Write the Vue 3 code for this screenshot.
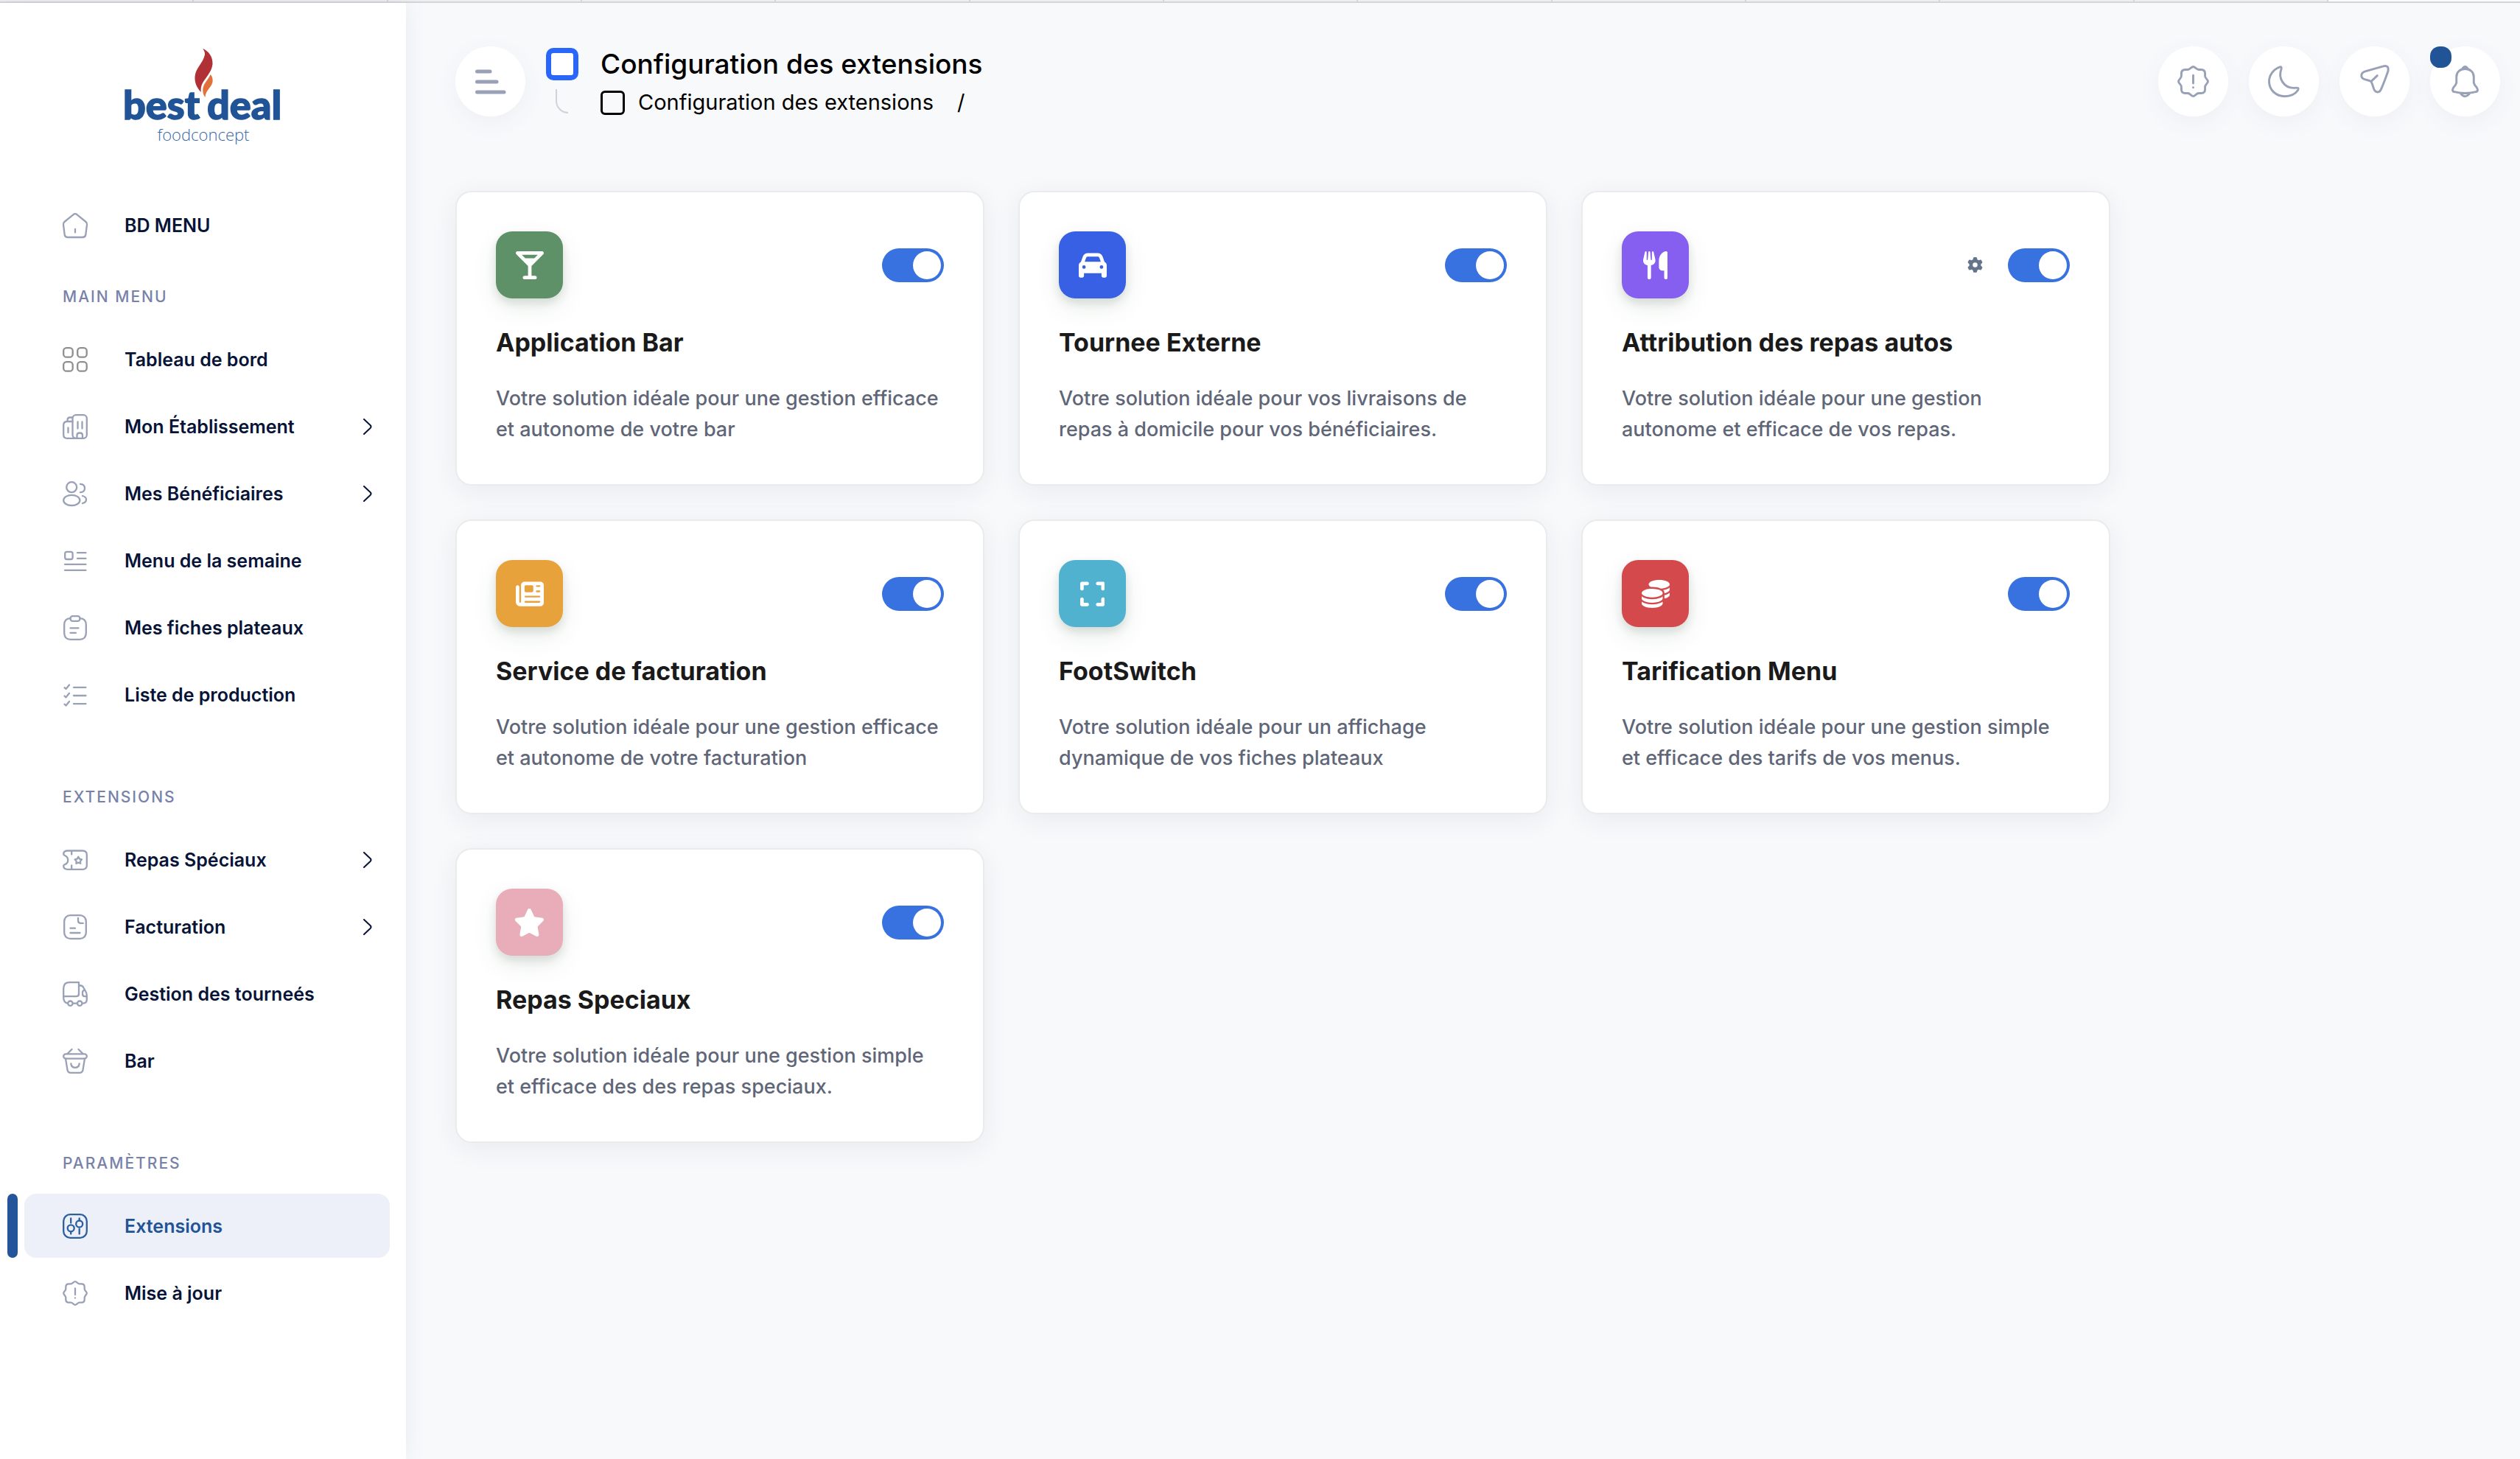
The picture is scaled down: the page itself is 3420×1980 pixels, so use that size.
<template>
  <div class="page">
    <div class="tab-strip">
      <span v-for="n in 12" :key="n" class="tab"></span>
    </div>

    <div class="layout">
      <aside class="sidebar">
        <a href="#" class="logo" aria-label="best deal foodconcept">
          <svg width="214" height="132" viewBox="0 0 214 132">
            <path fill="#b03035" d="M106 0C114 3 120 11 119.500 21C118.500 33 107 42 104.500 50C103.500 53 103.500 56 103.800 59C98 53 95 46 95.500 38C96.500 26 107 19 109 8C109.300 5 108 2 106 0Z" />
            <path fill="#e2703a" d="M116.500 35C119.500 38 120.500 43 119 47C117 53 110 57 109.500 66C105.500 61 105.500 54 108 49C110.500 44 115 40 116.500 35Z" />
            <text x="-2" y="96" class="logo-name">best</text>
            <text x="112" y="96" class="logo-name">deal</text>
            <text x="107" y="125" text-anchor="middle" class="logo-sub">foodconcept</text>
          </svg>
        </a>

        <nav class="menu">
          <section v-for="section in menu" :key="section.items[0].label" class="menu-section">
            <h2 v-if="section.title" class="menu-heading">{{ section.title }}</h2>
            <a
              v-for="item in section.items"
              :key="item.label"
              href="#"
              class="menu-item"
              :class="{ active: item.active, dashboard: item.icon === 'grid' }"
            >
              <svg class="menu-icon" viewBox="0 0 34 34" v-html="lineIcons[item.icon]"></svg>
              <span class="menu-label">{{ item.label }}</span>
              <svg v-if="item.children" class="chevron" viewBox="0 0 12 22">
                <path d="M1 1L9.500 9Q11.500 11 9.500 13L1 21" />
              </svg>
            </a>
          </section>
        </nav>
      </aside>

      <main class="main">
        <header class="topbar">
          <button type="button" class="round-btn" aria-label="Menu">
            <svg class="burger" viewBox="0 0 42 34">
              <path d="M2.500 3H20M2.500 17H29M2.500 31H39" />
            </svg>
          </button>

          <div class="heading">
            <div class="heading-marks">
              <span class="mark-box"></span>
              <span class="mark-branch"></span>
            </div>
            <div class="heading-text">
              <h1>Configuration des extensions</h1>
              <div class="breadcrumb">
                <span class="crumb-box"></span>
                <a href="#">Configuration des extensions</a>
                <span class="slash">/</span>
              </div>
            </div>
          </div>

          <div class="actions">
            <button
              v-for="action in actions"
              :key="action.icon"
              type="button"
              class="round-btn"
              :aria-label="action.label"
            >
              <svg class="action-icon" viewBox="0 0 34 34" v-html="lineIcons[action.icon]"></svg>
              <span v-if="action.badge" class="badge"></span>
            </button>
          </div>
        </header>

        <div class="cards">
          <article v-for="ext in extensions" :key="ext.id" class="card">
            <div class="card-top">
              <div class="tile" :style="{ backgroundColor: ext.color }">
                <svg class="tile-icon" :viewBox="`0 0 ${ext.box} 512`"><path :d="ext.path" /></svg>
              </div>
              <div class="card-controls">
                <button v-if="ext.settings" type="button" class="gear" aria-label="Paramètres">
                  <svg viewBox="0 0 512 512"><path :d="gearPath" /></svg>
                </button>
                <input :id="ext.id" v-model="ext.enabled" type="checkbox" class="switch" />
              </div>
            </div>
            <h3><label :for="ext.id">{{ ext.title }}</label></h3>
            <p>{{ ext.lines[0] }}<br />{{ ext.lines[1] }}</p>
          </article>
        </div>
      </main>
    </div>
  </div>
</template>

<script setup>
import { ref } from 'vue';

// outline icons, drawn on a 34 x 34 grid
const lineIcons = {
  home: '<path d="M19 1.800L31.500 12Q33.300 13.500 33 16L31.300 29.500Q30.800 33 27 33H7Q3.200 33 2.700 29.500L1 16Q.7 13.500 2.500 12L15 1.800Q17 .4 19 1.800Z"/><path d="M17 22V26.500"/>',
  grid: '<rect x="1.200" y="1.200" width="12.500" height="12.500" rx="4"/><rect x="20.200" y="1.200" width="12.500" height="12.500" rx="4"/><rect x="1.200" y="20.200" width="12.500" height="12.500" rx="4"/><rect x="20.200" y="20.200" width="12.500" height="12.500" rx="4"/>',
  building: '<rect x="13.500" y="1.200" width="19.300" height="31.600" rx="4.500"/><path d="M13.500 10H6Q1.200 10 1.200 15V28Q1.200 32.800 6 32.800H18M6.500 10V8.500Q6.500 4.500 10 4.500H13.500M7.500 18.500V25M20.500 10.500V19.500M26.500 10.500V19.500M19.500 32.500V28.500Q19.500 25.500 23.200 25.500T27 28.500V32.500"/>',
  users: '<circle cx="12.200" cy="8.200" r="7"/><ellipse cx="12.300" cy="25.900" rx="11.100" ry="7.100"/><path d="M24 3.800C28 4 30 6.500 30 9.500S28 15 24 15.200M27 20C30.500 20.800 32 22.800 32 25S30.500 29.200 27 30"/>',
  menu: '<rect x="3.200" y="4.800" width="10.400" height="10.200" rx="2.500"/><path d="M20 6.200H31.500M20 13.800H31.500M3 21.800H31.500M3 29.800H31.500"/>',
  clipboard: '<path d="M10.500 4.200Q2.200 4.500 2.200 13V24Q2.200 32.800 11 32.800H23Q31.800 32.800 31.800 24V13Q31.800 4.500 23.500 4.200"/><rect x="10.500" y="1.200" width="13" height="6.600" rx="3"/><path d="M10.500 17.300H21.500M10.500 23.800H18"/>',
  list: '<path d="M2.500 7.200L4.500 9L9 3.500M2.500 18.500L4.500 20.300L9 14.800M2.500 29.700L4.500 31.500L9 26M15 6.800H31.500M15 18H31.500M15 29.200H31.500"/>',
  ticket: '<path d="M7 4.500H27Q32.800 4.500 32.800 10V24.500Q32.800 29.800 27 29.800H7Q1.200 29.800 1.200 25Q1.200 23.800 3 23.200Q7.200 21.500 7.200 17.200T3 11Q1.200 10.400 1.200 9Q1.200 4.500 7 4.500ZM12.200 4.500V9.500M12.200 24.500V29.500"/><path d="M21.300 12.800L22.900 15.600L26 16.300L23.900 18.700L24.200 21.800L21.300 20.600L18.400 21.800L18.700 18.700L16.600 16.300L19.700 15.600Z"/>',
  invoice: '<rect x="2.200" y="1.200" width="29.600" height="31.600" rx="8"/><path d="M21 5V8.500Q21 11.800 24.500 11.800H27.800M10.500 18.700H17M10.500 25H23.500"/>',
  truck: '<path d="M7 29.600Q1.200 28.500 1.200 22V9.500Q1.200 1.200 9.500 1.200H22V16.500Q22 20.200 18.500 20.200H1.500M22 5.500H24.500Q27 5.500 28.500 8.500L31.500 14Q32.800 16.500 32.800 19V24.500Q32.800 29.600 27.500 29.600M14 29.600H19.500M29.500 11.500Q27 12.500 27 15V17Q27 20.200 30 20.200H32.500"/><circle cx="10.400" cy="29.700" r="3.200"/><circle cx="23.200" cy="29.700" r="3.200"/>',
  basket: '<rect x="1.200" y="7.400" width="31.600" height="6.200" rx="3"/><path d="M12.500 1L6.500 7M21.500 1L27.500 7M4 13.600L6.500 29Q7.200 32.800 11 32.800H23Q26.800 32.800 27.500 29L30 13.600M11.300 20.500Q12 25.800 17 25.800T22.700 20.500"/>',
  sliders: '<rect x="1.200" y="1.200" width="31.600" height="31.600" rx="9"/><circle cx="11.200" cy="19.800" r="4.500"/><circle cx="22.700" cy="14" r="4.500"/><path d="M11.200 6.500V12.500M11.200 24.500V27.500M22.700 6.500V9M22.700 21V27.500"/>',
  notice: '<path d="M17 1.200C19 1.200 20.500 4.300 22.800 4.300H25.500Q29.700 4.300 29.700 8.500V11.200C29.700 13.500 32.800 15 32.800 17S29.700 20.500 29.700 22.800V25.500Q29.700 29.700 25.500 29.700H22.800C20.500 29.700 19 32.800 17 32.800S13.500 29.700 11.200 29.700H8.500Q4.300 29.700 4.300 25.500V22.800C4.300 20.500 1.200 19 1.200 17S4.300 13.500 4.300 11.200V8.500Q4.300 4.300 8.500 4.300H11.200C13.500 4.300 15 1.200 17 1.200Z"/><path d="M17 10.500V19M17 23.400V23.600"/>',
  moon: '<path d="M12.300 1.700Q15 .6 14.300 3.500C10.500 13.500 17 24.500 28.500 24Q34 23 32 26.500C29 31 24 33 18 33C8.500 33 1.200 26 1.200 17C1.200 10 6 4 12.300 1.700Z"/>',
  plane: '<path d="M26.500 .7L7 6.300C1.500 8.200 2 13.300 6.500 14.800L11.500 16.200Q13.700 17 14.300 19L16.500 25.500C18.300 29.500 22.500 29.300 24 25.500Q26.500 20.500 31.600 6Q32.800 -.8 26.500 .7ZM13.700 16.700L20 10.800"/>',
  bell: '<path d="M7.700 18.500V12C7.700 7 11.500 3.600 17 3.600S26.300 7 26.300 12V18.500Q27 21 29 22.800Q31.500 26 29.500 28Q17 31.300 4.500 28Q2.500 26 5 22.800Q7 21 7.700 18.500ZM13.700 4Q17 -1.800 20.300 4M12.500 30.500Q17 35.500 21.500 30.500"/>'
};

const menu = [
  { items: [{ icon: 'home', label: 'BD MENU' }] },
  {
    title: 'MAIN MENU',
    items: [
      { icon: 'grid', label: 'Tableau de bord' },
      { icon: 'building', label: 'Mon Établissement', children: true },
      { icon: 'users', label: 'Mes Bénéficiaires', children: true },
      { icon: 'menu', label: 'Menu de la semaine' },
      { icon: 'clipboard', label: 'Mes fiches plateaux' },
      { icon: 'list', label: 'Liste de production' }
    ]
  },
  {
    title: 'EXTENSIONS',
    items: [
      { icon: 'ticket', label: 'Repas Spéciaux', children: true },
      { icon: 'invoice', label: 'Facturation', children: true },
      { icon: 'truck', label: 'Gestion des tourneés' },
      { icon: 'basket', label: 'Bar' }
    ]
  },
  {
    title: 'PARAMÈTRES',
    items: [
      { icon: 'sliders', label: 'Extensions', active: true },
      { icon: 'notice', label: 'Mise à jour' }
    ]
  }
];

const actions = [
  { icon: 'notice', label: 'Nouveautés' },
  { icon: 'moon', label: 'Mode sombre' },
  { icon: 'plane', label: 'Messages' },
  { icon: 'bell', label: 'Notifications', badge: true }
];

const gearPath =
  'M495.9 166.6c3.2 8.7 .5 18.4-6.4 24.6l-43.3 39.4c1.1 8.3 1.7 16.8 1.7 25.4s-.6 17.1-1.7 25.4l43.3 39.4c6.9 6.2 9.6 15.9 6.4 24.6c-4.4 11.9-9.7 23.3-15.8 34.3l-4.7 8.1c-6.6 11-14 21.4-22.1 31.2c-5.9 7.2-15.7 9.6-24.5 6.8l-55.7-17.7c-13.4 10.3-28.2 18.9-44 25.4l-12.5 57.1c-2 9.1-9 16.3-18.2 17.8c-13.8 2.3-28 3.5-42.5 3.5s-28.7-1.2-42.5-3.5c-9.2-1.5-16.2-8.7-18.2-17.8l-12.5-57.1c-15.8-6.5-30.6-15.1-44-25.4L83.1 425.9c-8.8 2.8-18.6 .3-24.5-6.8c-8.1-9.8-15.5-20.2-22.1-31.2l-4.7-8.1c-6.1-11-11.4-22.4-15.8-34.3c-3.2-8.7-.5-18.4 6.4-24.6l43.3-39.4C64.6 273.1 64 264.6 64 256s.6-17.1 1.7-25.4L22.4 191.2c-6.9-6.2-9.6-15.9-6.4-24.6c4.4-11.9 9.7-23.3 15.8-34.3l4.7-8.1c6.6-11 14-21.4 22.1-31.2c5.9-7.2 15.7-9.6 24.5-6.8l55.7 17.7c13.4-10.3 28.2-18.9 44-25.4l12.5-57.1c2-9.1 9-16.3 18.2-17.8C227.3 1.2 241.5 0 256 0s28.7 1.2 42.5 3.5c9.2 1.5 16.2 8.7 18.2 17.8l12.5 57.1c15.8 6.5 30.6 15.1 44 25.4l55.7-17.7c8.8-2.8 18.6-.3 24.5 6.8c8.1 9.8 15.5 20.2 22.1 31.2l4.7 8.1c6.1 11 11.4 22.4 15.8 34.3zM256 336a80 80 0 1 0 0-160 80 80 0 1 0 0 160z';

const extensions = ref([
  {
    id: 'ext-bar',
    title: 'Application Bar',
    lines: ['Votre solution idéale pour une gestion efficace', 'et autonome de votre bar'],
    color: '#5e9167',
    enabled: true,
    box: 512,
    path: 'M32 0C19.1 0 7.4 7.8 2.4 19.8s-2.2 25.7 6.9 34.9L224 269.3V448H160c-17.7 0-32 14.3-32 32s14.3 32 32 32h192c17.7 0 32-14.3 32-32s-14.3-32-32-32H288V269.3L502.600 54.600c9.200-9.200 11.900-22.900 6.900-34.900S492.900 0 480 0H32zM173.300 128l-64-64H402.700l-64 64H173.300z'
  },
  {
    id: 'ext-tournee',
    title: 'Tournee Externe',
    lines: ['Votre solution idéale pour vos livraisons de', 'repas à domicile pour vos bénéficiaires.'],
    color: '#3860e4',
    enabled: true,
    box: 512,
    path: 'M135.2 117.4L109.1 192H402.9l-26.1-74.6C372.3 104.6 360.2 96 346.6 96H165.4c-13.6 0-25.7 8.6-30.2 21.4zM39.6 196.8L74.8 96.3C88.3 57.8 124.6 32 165.4 32H346.6c40.8 0 77.1 25.8 90.6 64.3l35.2 100.5c23.2 9.6 39.6 32.5 39.6 59.2V448c0 17.7-14.3 32-32 32H448c-17.7 0-32-14.3-32-32V400H96v48c0 17.7-14.3 32-32 32H32c-17.7 0-32-14.3-32-32V256c0-26.7 16.4-49.6 39.6-59.2zM128 288a32 32 0 1 0 -64 0 32 32 0 1 0 64 0zm288 32a32 32 0 1 0 0-64 32 32 0 1 0 0 64z'
  },
  {
    id: 'ext-repas-autos',
    title: 'Attribution des repas autos',
    lines: ['Votre solution idéale pour une gestion', 'autonome et efficace de vos repas.'],
    color: '#865ff0',
    enabled: true,
    settings: true,
    box: 448,
    path: 'M416 0C400 0 288 32 288 176V288c0 35.3 28.7 64 64 64h32V480c0 17.7 14.3 32 32 32s32-14.3 32-32V32c0-17.7-14.3-32-32-32zM64 16C64 7.8 57.9 1 49.7 .1S34.2 4.6 32.4 12.5L2.1 148.8C.7 155.1 0 161.5 0 167.9c0 45.9 35.1 83.6 80 87.7V480c0 17.7 14.3 32 32 32s32-14.3 32-32V255.600c44.9-4.1 80-41.8 80-87.7c0-6.4-.7-12.8-2.1-19.1L191.600 12.500c-1.8-8-9.3-13.3-17.4-12.4S160 7.8 160 16V150.2c0 5.4-4.4 9.8-9.8 9.8c-5.1 0-9.3-3.9-9.8-9L127.9 14.600C127.2 6.3 120.3 0 112 0s-15.2 6.3-15.9 14.6L83.7 151c-.5 5.1-4.7 9-9.8 9c-5.4 0-9.8-4.4-9.8-9.8V16z'
  },
  {
    id: 'ext-facturation',
    title: 'Service de facturation',
    lines: ['Votre solution idéale pour une gestion efficace', 'et autonome de votre facturation'],
    color: '#e8a23c',
    enabled: true,
    box: 512,
    path: 'M96 96c0-35.3 28.7-64 64-64H448c35.3 0 64 28.7 64 64V416c0 35.3-28.7 64-64 64H80c-44.2 0-80-35.8-80-80V128c0-17.7 14.3-32 32-32s32 14.3 32 32V400c0 8.8 7.2 16 16 16s16-7.2 16-16V96zm64 24v80c0 13.3 10.7 24 24 24H296c13.3 0 24-10.7 24-24V120c0-13.3-10.7-24-24-24H184c-13.3 0-24 10.7-24 24zm208-8c0 8.8 7.2 16 16 16h48c8.8 0 16-7.2 16-16s-7.2-16-16-16H384c-8.8 0-16 7.2-16 16zm0 96c0 8.8 7.2 16 16 16h48c8.8 0 16-7.2 16-16s-7.2-16-16-16H384c-8.8 0-16 7.2-16 16zM160 304c0 8.8 7.2 16 16 16H432c8.8 0 16-7.2 16-16s-7.2-16-16-16H176c-8.8 0-16 7.2-16 16zm0 96c0 8.8 7.2 16 16 16H432c8.8 0 16-7.2 16-16s-7.2-16-16-16H176c-8.8 0-16 7.2-16 16z'
  },
  {
    id: 'ext-footswitch',
    title: 'FootSwitch',
    lines: ['Votre solution idéale pour un affichage', 'dynamique de vos fiches plateaux'],
    color: '#51b2d0',
    enabled: true,
    box: 448,
    path: 'M32 32C14.3 32 0 46.3 0 64v96c0 17.7 14.3 32 32 32s32-14.3 32-32V96h64c17.7 0 32-14.3 32-32s-14.3-32-32-32H32zM64 352c0-17.7-14.3-32-32-32s-32 14.3-32 32v96c0 17.7 14.3 32 32 32h96c17.7 0 32-14.3 32-32s-14.3-32-32-32H64V352zM320 32c-17.7 0-32 14.3-32 32s14.3 32 32 32h64v64c0 17.7 14.3 32 32 32s32-14.3 32-32V64c0-17.7-14.3-32-32-32H320zM448 352c0-17.7-14.3-32-32-32s-32 14.3-32 32v64H320c-17.7 0-32 14.3-32 32s14.3 32 32 32h96c17.7 0 32-14.3 32-32V352z'
  },
  {
    id: 'ext-tarification',
    title: 'Tarification Menu',
    lines: ['Votre solution idéale pour une gestion simple', 'et efficace des tarifs de vos menus.'],
    color: '#d44a4c',
    enabled: true,
    box: 512,
    path: 'M512 80c0 18-14.3 34.6-38.4 48c-29.1 16.1-72.5 27.5-122.3 30.9c-3.7-1.8-7.4-3.5-11.3-5C300.6 137.4 248.2 128 192 128c-8.3 0-16.4 .2-24.5 .6l-1.1-.6C142.3 114.6 128 98 128 80c0-44.2 86-80 192-80S512 35.8 512 80zM160.7 161.1c10.2-.7 20.7-1.1 31.3-1.1c62.2 0 117.4 12.3 152.5 31.4C369.3 204.9 384 221.7 384 240c0 4-.7 7.9-2.1 11.7c-4.6 13.2-17 25.3-35 35.5c-.4 .2-.9 .5-1.3 .7c-35 19.4-90.8 32-153.6 32c-59.6 0-112.9-11.3-148.2-29.1c-1.9-.9-3.7-1.9-5.5-2.9C14.3 274.6 0 258 0 240c0-34.8 53.4-64.5 128-75.4c10.5-1.5 21.4-2.7 32.7-3.5zM416 240c0-21.9-10.6-39.9-24.1-53.4c28.3-4.4 54.2-11.4 76.2-20.5c16.3-6.8 31.5-15.2 43.9-25.5V176c0 19.3-16.5 37.1-43.8 50.9c-14.6 7.4-32.4 13.7-52.4 18.5c.1-1.8 .2-3.5 .2-5.3zm-32 96c0 18-14.3 34.6-38.4 48c-1.8 1-3.6 1.9-5.5 2.9C304.9 404.7 251.6 416 192 416c-62.8 0-118.6-12.6-153.6-32C14.3 370.6 0 354 0 336V300.6c12.5 10.3 27.6 18.7 43.9 25.5C83.4 342.6 135.8 352 192 352s108.6-9.4 148.1-25.9c7.8-3.2 15.3-6.9 22.4-10.9c6.1-3.4 11.8-7.2 17.2-11.2c1.5-1.1 2.9-2.3 4.3-3.4V336zm32 0V278.1c19-4.2 36.5-9.5 52.1-16c16.3-6.8 31.5-15.2 43.9-25.5V272c0 10.5-5 21-14.9 30.9c-16.3 16.3-45 29.7-81.3 38.4c.1-1.7 .2-3.5 .2-5.3zM192 448c56.2 0 108.6-9.4 148.1-25.9c16.3-6.8 31.5-15.2 43.9-25.5V432c0 44.2-86 80-192 80S0 476.2 0 432V396.6c12.5 10.3 27.6 18.7 43.9 25.5C83.4 438.6 135.8 448 192 448z'
  },
  {
    id: 'ext-speciaux',
    title: 'Repas Speciaux',
    lines: ['Votre solution idéale pour une gestion simple', 'et efficace des des repas speciaux.'],
    color: '#e8adb9',
    enabled: true,
    box: 576,
    path: 'M316.9 18C311.6 7 300.4 0 288.1 0s-23.4 7-28.8 18L195 150.3 51.4 171.5c-12 1.8-22 10.2-25.7 21.7s-.7 24.2 7.9 32.7L137.8 329 113.2 474.7c-2 12 3 24.2 12.9 31.3s23 8 33.8 2.3l128.3-68.5 128.3 68.5c10.8 5.7 23.9 4.9 33.8-2.3s14.9-19.3 12.9-31.3L438.5 329 542.7 225.9c8.6-8.5 11.7-21.2 7.9-32.7s-13.7-19.9-25.7-21.7L381.2 150.3 316.9 18z'
  }
]);
</script>

<style>
body {
  margin: 0;
  background: #f8f9fb;
}
</style>

<style scoped>
.page {
  display: flex;
  flex-direction: column;
  min-height: 100vh;
  font-family: Inter, "Noto Sans", sans-serif;
  color: #000;
}

.page *,
.page *::before {
  box-sizing: border-box;
}

a {
  color: inherit;
  text-decoration: none;
}

button {
  padding: 0;
  border: 0;
  background: none;
  font: inherit;
  cursor: pointer;
}

/* browser tab edge on top of the page */
.tab-strip {
  display: flex;
  height: 4px;
  padding-right: 260px;
  border-bottom: 2px solid #d3d5d8;
  background: linear-gradient(to right, #eeeeef 0 92.4%, #fafafb 92.4%);
}

.tab {
  flex: 1;
  border-right: 2px solid #d3d5d8;
}

.layout {
  display: flex;
  flex: 1;
}

/* sidebar */
.sidebar {
  flex: none;
  width: 551px;
  padding-top: 62px;
  background: #fff;
  box-shadow: 0 0 28px rgba(82, 92, 110, 0.09);
}

.logo {
  display: flex;
  justify-content: center;
  margin-bottom: 64px;
}

.logo svg {
  overflow: visible;
}

.logo-name {
  font-family: Lato, sans-serif;
  font-size: 54px;
  font-weight: 900;
  fill: #205497;
  stroke: #205497;
  stroke-width: 1.5px;
}

.logo-sub {
  font-family: "Open Sans", sans-serif;
  font-size: 22px;
  font-weight: 300;
  fill: #3a69a6;
}

.menu {
  display: flex;
  flex-direction: column;
}

.menu-section {
  display: flex;
  flex-direction: column;
  gap: 4px;
  padding: 0 22px 0 33px;
  margin-bottom: 46px;
}

.menu-section:first-child {
  margin-bottom: 4px;
}

.menu-heading {
  margin: 0;
  padding: 12px 0 0 52px;
  font-size: 21px;
  font-weight: 500;
  line-height: 75px;
  letter-spacing: 2px;
  color: #7882a9;
}

.menu-item {
  position: relative;
  display: flex;
  align-items: center;
  height: 87px;
  padding: 0 24px 0 52px;
  border-radius: 16px;
  font-size: 25px;
  font-weight: 600;
  color: #071437;
}

.menu-icon {
  width: 34px;
  height: 34px;
  margin-right: 50px;
  overflow: visible;
  fill: none;
  stroke: #99a1b7;
  stroke-width: 2.3;
  stroke-linecap: round;
  stroke-linejoin: round;
}

.dashboard .menu-icon {
  stroke: #8f8f8f;
}

.menu-label {
  flex: 1;
  white-space: nowrap;
}

.chevron {
  width: 12px;
  height: 22px;
  fill: none;
  stroke: #071437;
  stroke-width: 2;
  stroke-linecap: round;
}

.menu-item.active {
  background: #edf0f8;
  color: #205497;
}

.menu-item.active .menu-icon {
  stroke: #2c5f9f;
}

.menu-item.active::before {
  content: "";
  position: absolute;
  top: 0;
  bottom: 0;
  left: -23px;
  width: 14px;
  border-radius: 7px;
  background: #24559a;
}

/* main area */
.main {
  flex: 1;
  min-width: 0;
  padding: 59px 27px 100px 67px;
}

.topbar {
  display: flex;
  align-items: flex-start;
  margin-bottom: 99px;
}

.round-btn {
  position: relative;
  display: flex;
  align-items: center;
  justify-content: center;
  width: 95px;
  height: 95px;
  border-radius: 50%;
  background: #fff;
  box-shadow: 0 8px 32px rgba(70, 90, 140, 0.06);
}

.burger {
  width: 42px;
  height: 34px;
  fill: none;
  stroke: #99a1b7;
  stroke-width: 5;
  stroke-linecap: round;
}

.heading {
  display: flex;
  gap: 30px;
  padding-top: 2px;
  margin-left: 28px;
}

.heading-marks {
  display: flex;
  flex-direction: column;
  gap: 12px;
}

.mark-box {
  width: 44px;
  height: 44px;
  border: 7px solid #2b66fb;
  border-radius: 10px;
  background: #fff;
}

.mark-branch {
  width: 17px;
  height: 33px;
  margin-left: 13px;
  border-bottom: 2px solid #cfd2d8;
  border-left: 2px solid #cfd2d8;
  border-bottom-left-radius: 17px;
}

.heading-text {
  display: flex;
  flex-direction: column;
  gap: 9px;
}

h1 {
  margin: 0;
  font-size: 37px;
  font-weight: 500;
  line-height: 44px;
}

.breadcrumb {
  display: flex;
  align-items: center;
  gap: 18px;
  font-size: 29px;
  line-height: 42px;
}

.crumb-box {
  width: 33px;
  height: 33px;
  border: 3px solid #000;
  border-radius: 6px;
}

.slash {
  margin-left: 14px;
}

.actions {
  display: flex;
  gap: 28px;
  margin-left: auto;
}

.action-icon {
  width: 43px;
  height: 43px;
  overflow: visible;
  fill: none;
  stroke: #99a1b7;
  stroke-width: 2.3;
  stroke-linecap: round;
  stroke-linejoin: round;
}

.badge {
  position: absolute;
  top: 0;
  left: 0;
  width: 29px;
  height: 29px;
  border-radius: 13px;
  background: #205497;
}

/* extension cards */
.cards {
  display: grid;
  grid-template-columns: repeat(3, minmax(0, 1fr));
  gap: 46px;
  max-width: 2246px;
}

.card {
  padding: 53px;
  border: 2px solid #e9ebed;
  border-radius: 22px;
  background: #fff;
  box-shadow: 0 8px 36px rgba(30, 40, 50, 0.07);
}

.card-top {
  display: flex;
  align-items: center;
  justify-content: space-between;
}

.tile {
  display: flex;
  align-items: center;
  justify-content: center;
  width: 91px;
  height: 91px;
  border-radius: 22px;
  box-shadow: 0 6px 12px rgba(30, 60, 40, 0.12), 0 12px 32px rgba(30, 80, 40, 0.1);
}

.tile-icon {
  height: 38px;
  fill: #fff;
}

.card-controls {
  display: flex;
  align-items: center;
  gap: 34px;
}

.gear {
  display: flex;
}

.gear svg {
  width: 21px;
  height: 21px;
  fill: #64748b;
}

.switch {
  appearance: none;
  display: flex;
  align-items: center;
  width: 84px;
  height: 46px;
  margin: 0;
  padding: 0 4px;
  border-radius: 23px;
  background: #c5cbd6;
  cursor: pointer;
}

.switch::before {
  content: "";
  width: 38px;
  height: 38px;
  border-radius: 50%;
  background: #fff;
}

.switch:checked {
  justify-content: flex-end;
  background: #3871e0;
}

h3 {
  margin: 39px 0 34px;
  font-size: 34px;
  font-weight: 700;
  line-height: 42px;
  color: #1a1a1a;
}

p {
  margin: 0;
  font-size: 27px;
  font-weight: 500;
  line-height: 42px;
  color: #5f6678;
}
</style>
